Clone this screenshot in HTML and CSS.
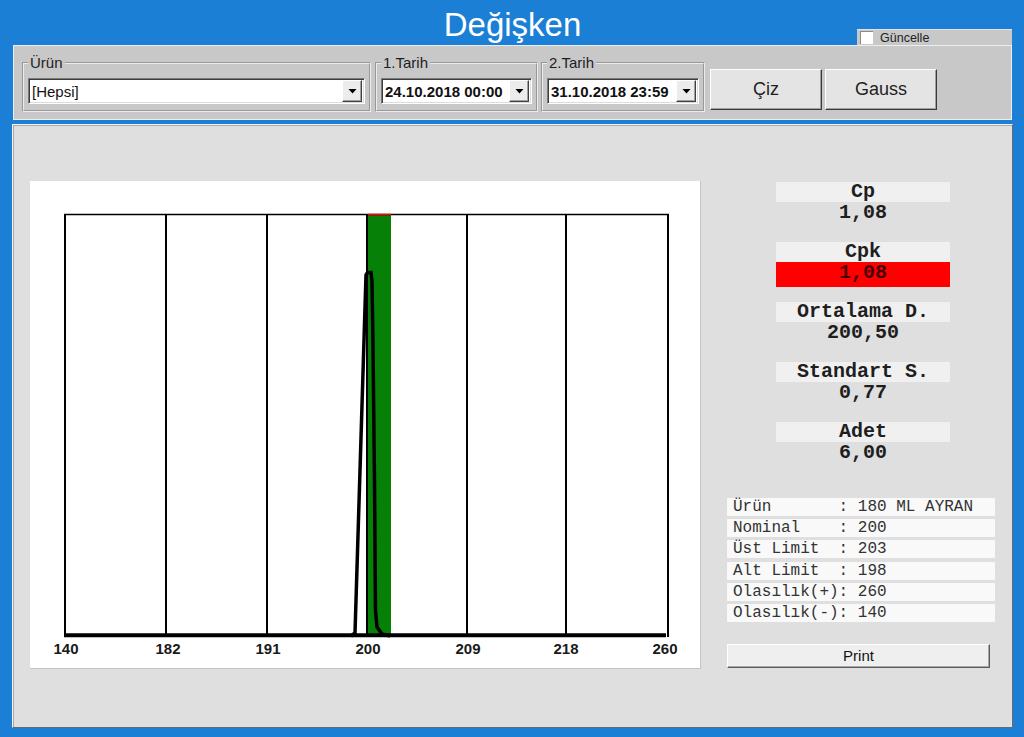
FILE: index.html
```html
<!DOCTYPE html>
<html lang="tr">
<head>
<meta charset="utf-8">
<title>Değişken</title>
<link rel="stylesheet" href="styles.css">
</head>
<body>
<div class="window">
  <header class="titlebar">
    <h1 class="title">Değişken</h1>
    <label class="refresh"><span class="check"></span><span>Güncelle</span></label>
  </header>

  <div class="toolbar">
    <fieldset class="group g-product">
      <legend>Ürün</legend>
      <div class="combo">
        <span class="combo-text">[Hepsi]</span>
        <span class="combo-btn"><svg width="9" height="5" viewBox="0 0 9 5"><path d="M0.5 0H8.5L4.5 4.5Z" fill="#000"/></svg></span>
      </div>
    </fieldset>
    <fieldset class="group g-date1">
      <legend>1.Tarih</legend>
      <div class="combo combo-date">
        <span class="combo-text">24.10.2018 00:00</span>
        <span class="combo-btn"><svg width="9" height="5" viewBox="0 0 9 5"><path d="M0.5 0H8.5L4.5 4.5Z" fill="#000"/></svg></span>
      </div>
    </fieldset>
    <fieldset class="group g-date2">
      <legend>2.Tarih</legend>
      <div class="combo combo-date">
        <span class="combo-text">31.10.2018 23:59</span>
        <span class="combo-btn"><svg width="9" height="5" viewBox="0 0 9 5"><path d="M0.5 0H8.5L4.5 4.5Z" fill="#000"/></svg></span>
      </div>
    </fieldset>
    <button class="btn btn-draw">Çiz</button>
    <button class="btn btn-gauss">Gauss</button>
  </div>

  <main class="panel">
    <div class="chart">
      <svg width="670" height="487" viewBox="0 0 670 487">
        <rect x="336.5" y="33" width="24.5" height="422" fill="#078007"/>
        <g stroke="#000" stroke-width="2">
          <line x1="35" y1="33" x2="35" y2="456"/>
          <line x1="136" y1="33" x2="136" y2="456"/>
          <line x1="237" y1="33" x2="237" y2="456"/>
          <line x1="337" y1="33" x2="337" y2="456"/>
          <line x1="437" y1="33" x2="437" y2="456"/>
          <line x1="536" y1="33" x2="536" y2="456"/>
          <line x1="638" y1="33" x2="638" y2="456"/>
        </g>
        <line x1="34" y1="33.5" x2="639" y2="33.5" stroke="#000" stroke-width="1.5"/>
        <line x1="338" y1="33.5" x2="361" y2="33.5" stroke="#f00" stroke-width="1.5"/>
        <line x1="34" y1="454.3" x2="636" y2="454.3" stroke="#000" stroke-width="4"/>
        <polyline points="321,455 325,452 336,94 337.5,91.5 341,91.5 342,100 343,165 344.5,300 345.5,430 347,446 352,453 360,455" fill="none" stroke="#000" stroke-width="3.5" stroke-linejoin="miter"/>
        <g class="axis-labels" text-anchor="middle">
          <text x="36" y="473">140</text>
          <text x="138" y="473">182</text>
          <text x="238" y="473">191</text>
          <text x="338" y="473">200</text>
          <text x="438" y="473">209</text>
          <text x="536" y="473">218</text>
          <text x="635" y="473">260</text>
        </g>
      </svg>
    </div>

    <aside class="side">
      <div class="stat">
        <div class="stat-label">Cp</div>
        <div class="stat-value">1,08</div>
      </div>
      <div class="stat">
        <div class="stat-label">Cpk</div>
        <div class="stat-value stat-alert">1,08</div>
      </div>
      <div class="stat">
        <div class="stat-label">Ortalama D.</div>
        <div class="stat-value">200,50</div>
      </div>
      <div class="stat">
        <div class="stat-label">Standart S.</div>
        <div class="stat-value">0,77</div>
      </div>
      <div class="stat">
        <div class="stat-label">Adet</div>
        <div class="stat-value">6,00</div>
      </div>

      <div class="info">
        <div class="info-row">Ürün       : 180 ML AYRAN</div>
        <div class="info-row">Nominal    : 200</div>
        <div class="info-row">Üst Limit  : 203</div>
        <div class="info-row">Alt Limit  : 198</div>
        <div class="info-row">Olasılık(+): 260</div>
        <div class="info-row">Olasılık(-): 140</div>
      </div>

      <button class="print">Print</button>
    </aside>
  </main>
</div>
</body>
</html>
```

FILE: styles.css
```css
* {
  box-sizing: border-box;
  margin: 0;
  padding: 0;
}

html,
body {
  width: 1024px;
  height: 737px;
  overflow: hidden;
}

body {
  background: #1a7fd5;
  font-family: "Liberation Sans", Arial, sans-serif;
  color: #1e1e1e;
}

.window {
  height: 737px;
  display: flex;
  flex-direction: column;
  padding: 0 11px 9px 12px;
}

/* title bar */
.titlebar {
  height: 45px;
  display: grid;
  grid-template-columns: 1fr auto 1fr;
}

.title {
  grid-column: 2;
  font-weight: normal;
  font-size: 33px;
  line-height: 38px;
  padding-top: 6px;
  color: #fff;
}

.refresh {
  grid-column: 3;
  justify-self: end;
  align-self: end;
  width: 155px;
  height: 16px;
  margin-right: 1px;
  background: #c8c8c8;
  border-top: 1px solid #e4e4e4;
  display: flex;
  align-items: center;
  padding-left: 3px;
  font-size: 12.5px;
  color: #222;
}

.check {
  width: 13px;
  height: 13px;
  background: #fff;
  border-top: 1px solid #8a8a8a;
  border-left: 1px solid #8a8a8a;
  margin-right: 7px;
}

/* toolbar */
.toolbar {
  height: 75px;
  margin: 0 1px;
  background: #c8c8c8;
  border: 1px solid #ededed;
  display: flex;
  align-items: flex-start;
  padding: 8px 0 0 8px;
}

.group {
  border: 2px groove #ececec;
  padding: 7px 4px 6px 4px;
  min-width: 0;
}

.group legend {
  font-size: 15px;
  line-height: 17px;
  padding: 0 2px;
  color: #1e1e1e;
}

.g-product {
  width: 349px;
}

.g-date1 {
  width: 163px;
  margin-left: 4px;
}

.g-date2 {
  width: 164px;
  margin-left: 3px;
}

.combo {
  display: flex;
  align-items: center;
  height: 26px;
  background: #fff;
  border: 1px solid;
  border-color: #7a7a7a #fff #fff #7a7a7a;
  box-shadow: inset 1px 1px 0 #3c3c3c, inset -1px -1px 0 #dcdcdc;
  padding: 0 2px 0 3px;
}

.combo-text {
  flex: 1;
  font-size: 15px;
  white-space: nowrap;
  color: #111;
}

.combo-date .combo-text {
  font-weight: bold;
}

.combo-btn {
  width: 20px;
  height: 22px;
  background: #ececec;
  border: 1px solid;
  border-color: #fff #404040 #404040 #fff;
  box-shadow: inset -1px -1px 0 #a0a0a0;
  display: flex;
  align-items: center;
  justify-content: center;
}

.combo-btn svg {
  display: block;
}

.btn {
  width: 112px;
  height: 41px;
  margin-top: 15px;
  font: 18px "Liberation Sans", Arial, sans-serif;
  color: #1e1e1e;
  background: #e4e4e4;
  border: 1px solid;
  border-color: #fff #3a3a3a #3a3a3a #fff;
  box-shadow: inset -1px -1px 0 #a0a0a0;
}

.btn-draw {
  margin-left: 5px;
}

.btn-gauss {
  margin-left: 3px;
}

/* main panel */
.panel {
  flex: 1;
  margin-top: 4px;
  background: #dfdfdf;
  border: 1px solid;
  border-color: #f4f4f4 #6a6a6a #6a6a6a #f4f4f4;
  box-shadow: inset 1px 1px 0 #a8a8a8;
  display: flex;
  align-items: flex-start;
  padding: 56px 0 0 17px;
}

.chart {
  width: 671px;
  height: 488px;
  background: #fff;
  border-right: 1px solid #c4c4c4;
  border-bottom: 1px solid #c4c4c4;
}

.chart svg {
  display: block;
}

.axis-labels {
  font: bold 15px "Liberation Sans", Arial, sans-serif;
  fill: #1a1a1a;
}

.side {
  width: 268px;
  margin-left: 26px;
  margin-top: 1px;
}

.stat {
  width: 174px;
  margin-left: 49px;
  margin-bottom: 15px;
  font: bold 20px "Liberation Mono", "Courier New", monospace;
  text-align: center;
  color: #1e1e1e;
}

.stat-label {
  height: 20px;
  line-height: 20px;
  background: #f0f0f0;
}

.stat-value {
  height: 25px;
  line-height: 22px;
}

.stat-alert {
  background: #ff0000;
  color: #4a0000;
}

.info {
  margin-top: 31px;
}

.info-row {
  height: 18px;
  margin-bottom: 3.2px;
  background: #f9f9f9;
  padding-left: 6px;
  font: 16px/18px "Liberation Mono", "Courier New", monospace;
  white-space: pre;
  color: #333;
}

.print {
  display: block;
  width: 263px;
  height: 24px;
  margin-top: 22px;
  font: 15px "Liberation Sans", Arial, sans-serif;
  color: #111;
  background: #efefef;
  border: 1px solid;
  border-color: #fff #5a5a5a #5a5a5a #fff;
  box-shadow: inset -1px -1px 0 #a8a8a8;
}
```
